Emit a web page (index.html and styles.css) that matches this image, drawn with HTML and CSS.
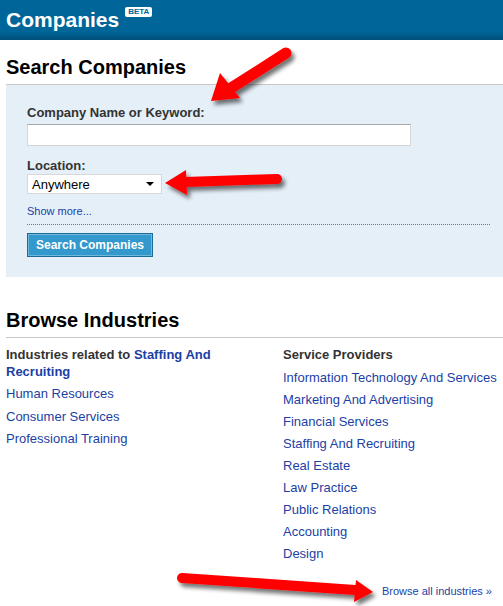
FILE: index.html
```html
<!DOCTYPE html>
<html>
<head>
<meta charset="utf-8">
<link rel="stylesheet" href="styles.css">
</head>
<body>
<div class="page">
  <header class="topbar">
    <h1 class="title">Companies</h1><span class="beta">BETA</span>
  </header>

  <section class="search">
    <h2 class="section-title">Search Companies</h2>
    <form class="search-box">
      <label class="field-label">Company Name or Keyword:</label>
      <input class="text-input" type="text">
      <label class="field-label loc-label">Location:</label>
      <div class="select"><span>Anywhere</span><span class="caret"></span></div>
      <a class="show-more" href="#">Show more...</a>
      <div class="dots"></div>
      <button class="btn" type="button">Search Companies</button>
    </form>
  </section>

  <section class="browse">
    <h2 class="section-title">Browse Industries</h2>
    <div class="cols">
      <div class="col col-left">
        <div class="col-head">Industries related to <a href="#">Staffing And</a><br><a href="#">Recruiting</a></div>
        <ul class="links">
          <li><a href="#">Human Resources</a></li>
          <li><a href="#">Consumer Services</a></li>
          <li><a href="#">Professional Training</a></li>
        </ul>
      </div>
      <div class="col col-right">
        <div class="col-head">Service Providers</div>
        <ul class="links">
          <li><a href="#">Information Technology And Services</a></li>
          <li><a href="#">Marketing And Advertising</a></li>
          <li><a href="#">Financial Services</a></li>
          <li><a href="#">Staffing And Recruiting</a></li>
          <li><a href="#">Real Estate</a></li>
          <li><a href="#">Law Practice</a></li>
          <li><a href="#">Public Relations</a></li>
          <li><a href="#">Accounting</a></li>
          <li><a href="#">Design</a></li>
        </ul>
      </div>
    </div>
    <div class="browse-all"><a href="#">Browse all industries »</a></div>
  </section>

  <svg class="arrows" width="503" height="606" viewBox="0 0 503 606">
    <defs>
      <filter id="sh" x="-20%" y="-50%" width="140%" height="200%">
        <feGaussianBlur in="SourceAlpha" stdDeviation="2"/>
        <feOffset dx="3" dy="4" result="b"/>
        <feComponentTransfer><feFuncA type="linear" slope="0.55"/></feComponentTransfer>
        <feMerge><feMergeNode/><feMergeNode in="SourceGraphic"/></feMerge>
      </filter>
    </defs>
    <g filter="url(#sh)" fill="#f00" stroke="#f00">
      <line x1="286" y1="53" x2="228" y2="90" stroke-width="11" stroke-linecap="round"/>
      <polygon points="211,101 220,73 240,98" stroke="none"/>
      <line x1="277" y1="179" x2="185" y2="182" stroke-width="10" stroke-linecap="round"/>
      <polygon points="165,183 186,170 187,195" stroke="none"/>
      <line x1="182" y1="578" x2="355" y2="590" stroke-width="10" stroke-linecap="round"/>
      <polygon points="373,592 356,580 354,602" stroke="none"/>
    </g>
  </svg>
</div>
</body>
</html>
```

FILE: styles.css
```css
* { box-sizing: border-box; }
html, body { margin: 0; padding: 0; background: #fff; }
body { font-family: "Liberation Sans", Arial, sans-serif; color: #333; }
a { color: #1b3fa5; text-decoration: none; }

.page { position: relative; width: 503px; height: 606px; overflow: hidden; }

.topbar {
  height: 40px;
  background: linear-gradient(to bottom, #006699 0, #006699 31px, #004f7a 40px);
  display: flex;
  align-items: flex-start;
  padding: 7px 0 0 6px;
}
.title {
  margin: 0;
  font-size: 21px;
  line-height: 26px;
  font-weight: bold;
  color: #fff;
}
.beta {
  margin: 0 0 0 6px;
  background: #fff;
  color: #006699;
  font-size: 8px;
  font-weight: bold;
  line-height: 10px;
  padding: 0 3px;
  border-radius: 2px;
}

.section-title {
  margin: 0;
  font-size: 20px;
  line-height: 24px;
  font-weight: bold;
  color: #000;
  padding-bottom: 5px;
  border-bottom: 1px solid #c8c8c8;
}

.search { padding: 15px 0 0 6px; }
.search-box {
  display: flex;
  flex-direction: column;
  align-items: flex-start;
  background: #e5eff7;
  padding: 20px 13px 20px 21px;
  margin: 0;
}
.field-label {
  font-size: 13px;
  line-height: 16px;
  font-weight: bold;
  color: #333;
}
.text-input {
  margin-top: 3px;
  width: 384px;
  height: 22px;
  border: 1px solid #d5d5d5;
  border-top-color: #a8a8a8;
  background: #fff;
  font-family: inherit;
  font-size: 13px;
}
.loc-label { margin-top: 12px; }
.select {
  margin-top: 0;
  width: 135px;
  height: 20px;
  background: #fff;
  border: 1px solid #d8d8d8;
  display: flex;
  align-items: center;
  justify-content: space-between;
  padding: 0 7px 0 4px;
  font-size: 13px;
  color: #000;
}
.caret {
  width: 0; height: 0;
  border-left: 4px solid transparent;
  border-right: 4px solid transparent;
  border-top: 4px solid #000;
}
.show-more {
  margin-top: 10px;
  font-size: 11px;
  line-height: 14px;
}
.dots {
  align-self: stretch;
  margin-top: 6px;
  border-top: 1px dotted #777;
}
.btn {
  margin-top: 8px;
  width: 126px;
  height: 24px;
  background: #3399cc;
  border: 1px solid #1b6a98;
  box-shadow: inset 0 0 0 1px #6fb9de;
  color: #fff;
  font-family: inherit;
  font-size: 12px;
  font-weight: bold;
  padding: 0;
}

.browse { padding: 31px 0 0 6px; }
.cols {
  display: grid;
  grid-template-columns: 277px 1fr;
  padding-top: 8px;
}
.col-head {
  font-size: 13px;
  font-weight: bold;
  line-height: 17px;
  color: #333;
}
.links { list-style: none; margin: 0; padding: 0; }
.links li { font-size: 13px; line-height: 22px; }
.col-left .links { margin-top: 3px; }
.col-left .links li:nth-child(2) { line-height: 23px; }
.col-right .links { margin-top: 4px; }
.browse-all {
  text-align: right;
  padding-right: 11px;
  margin-top: 19px;
  font-size: 11px;
  line-height: 14px;
}

.arrows { position: absolute; left: 0; top: 0; pointer-events: none; }
```
